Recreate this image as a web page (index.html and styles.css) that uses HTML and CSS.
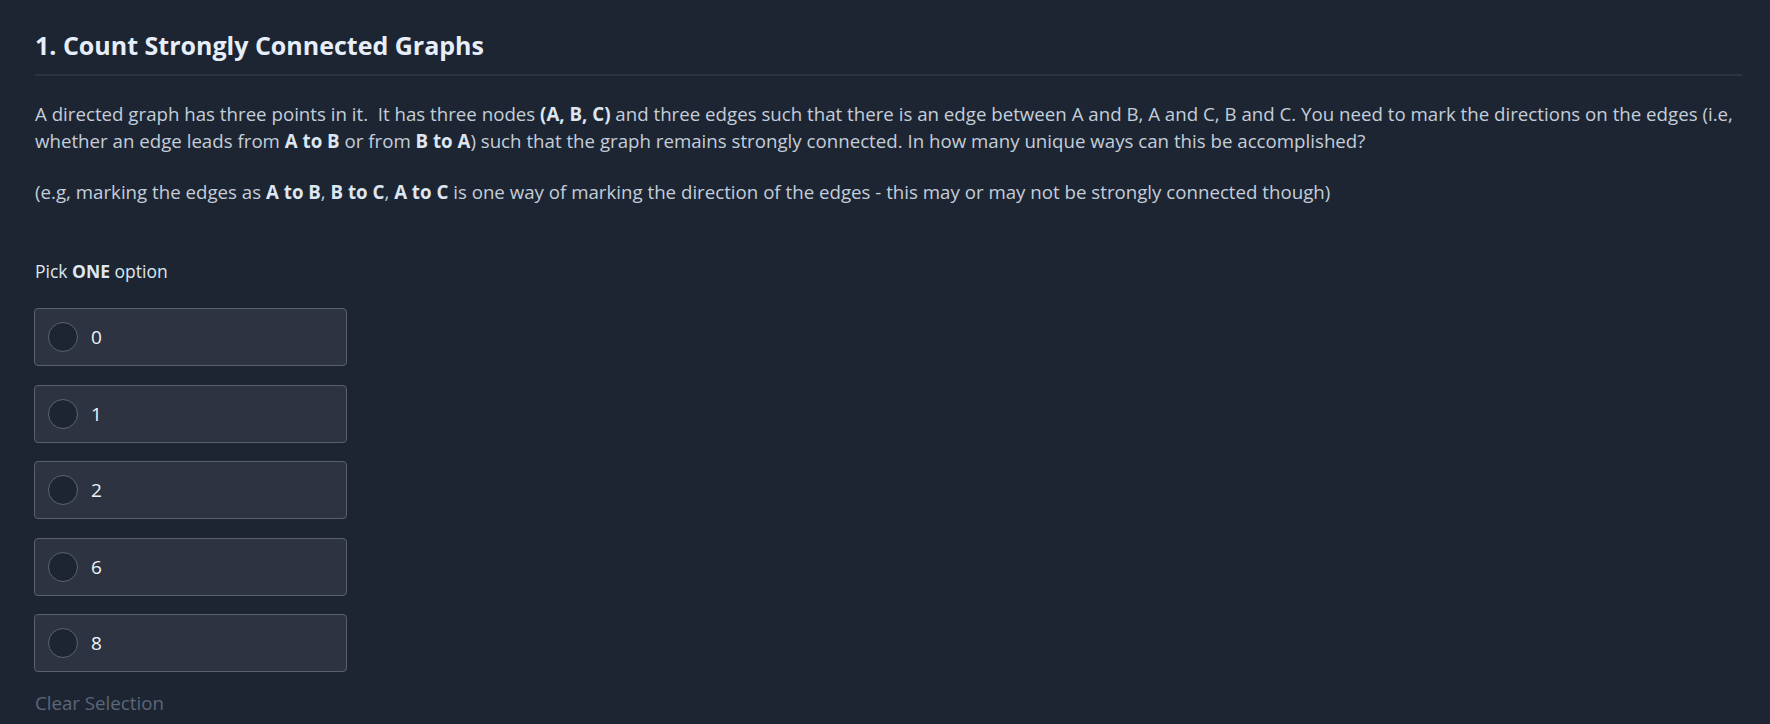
FILE: index.html
```html
<!DOCTYPE html>
<html>
<head>
<meta charset="utf-8">
<link rel="stylesheet" href="styles.css">
</head>
<body>
<div class="question">
  <h1 class="title">1. Count Strongly Connected Graphs</h1>
  <div class="statement">
    <p>A directed graph has three points in it.&nbsp; It has three nodes <b>(A, B, C)</b> and three edges such that there is an edge between A and B, A and C, B and C. You need to mark the directions on the edges (i.e, whether an edge leads from <b>A to B</b> or from <b>B to A</b>) such that the graph remains strongly connected. In how many unique ways can this be accomplished?</p>
    <p>(e.g, marking the edges as <b>A to B</b>, <b>B to C</b>, <b>A to C</b> is one way of marking the direction of the edges - this may or may not be strongly connected though)</p>
  </div>
  <div class="pick">Pick <b>ONE</b> option</div>
  <div class="options">
    <div class="option"><span class="radio"></span><span class="label">0</span></div>
    <div class="option"><span class="radio"></span><span class="label">1</span></div>
    <div class="option"><span class="radio"></span><span class="label">2</span></div>
    <div class="option"><span class="radio"></span><span class="label">6</span></div>
    <div class="option"><span class="radio"></span><span class="label">8</span></div>
  </div>
  <div class="clear">Clear Selection</div>
</div>
</body>
</html>
```
FILE: styles.css
```css
html, body {
  margin: 0;
  padding: 0;
  background: #1e2532;
  height: 100%;
  overflow: hidden;
}
body {
  font-family: "Open Sans", "Noto Sans", sans-serif;
  color: #c3ceda;
}
.question {
  padding: 28px 28px 0 35px;
}
.title {
  margin: 0;
  font-size: 25px;
  font-weight: 700;
  line-height: 34px;
  color: #e6eef9;
  padding-bottom: 12px;
  border-bottom: 2px solid #2c3341;
}
.statement {
  margin-top: 24px;
  font-size: 18.7px;
  line-height: 27px;
}
.statement p {
  margin: 0 0 24px 0;
}
.statement b {
  font-weight: 700;
  color: #dde6f1;
}
.pick {
  margin-top: 54px;
  font-size: 17.5px;
  line-height: 24px;
  color: #dde6f1;
}
.pick b {
  font-weight: 700;
}
.options {
  margin-top: 25px;
  display: flex;
  flex-direction: column;
  gap: 18.5px;
  margin-left: -1px;
}
.option {
  box-sizing: border-box;
  width: 313px;
  height: 58px;
  background: #2d3340;
  border: 1px solid #5a606c;
  border-radius: 4px;
  display: flex;
  align-items: center;
  padding-left: 13px;
}
.radio {
  box-sizing: border-box;
  width: 30px;
  height: 30px;
  border-radius: 50%;
  border: 1px solid #5d6470;
  background: #1e2532;
  flex: none;
}
.label {
  margin-left: 13px;
  font-size: 19px;
  color: #eef3fa;
}
.clear {
  margin-top: 18px;
  font-size: 18.7px;
  color: #5c6778;
}
```
